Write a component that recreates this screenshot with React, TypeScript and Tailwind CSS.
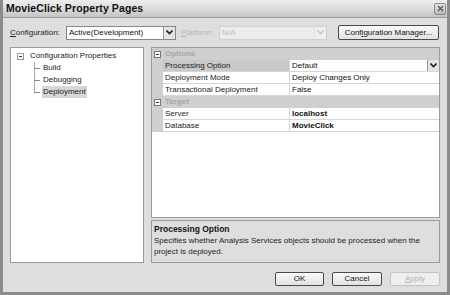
import React from "react";

const font = { fontFamily: '"Liberation Sans", Arial, sans-serif' };

const MinusBox = ({ className = "" }: { className?: string }) => (
  <span className={`flex items-center justify-center w-[7px] h-[7px] border border-[#777] bg-white ${className}`}>
    <span className="w-[3px] h-px bg-[#333]" />
  </span>
);

const Arrow = ({ disabled = false }: { disabled?: boolean }) => (
  <span className={`flex items-center justify-center w-[12px] h-full border-l ${disabled ? "border-[#e0e0e0] bg-[#efefef]" : "border-[#999] bg-[#e4e4e4]"}`}>
    <svg width="7" height="5" viewBox="0 0 7 5">
      <path d="M0.5 0.5 L3.5 3.5 L6.5 0.5" fill="none" stroke={disabled ? "#c8c8c8" : "#222"} strokeWidth="1.6" />
    </svg>
  </span>
);

const Button = ({ label, disabled = false, className = "" }: { label: React.ReactNode; disabled?: boolean; className?: string }) => (
  <button className={`flex items-center justify-center h-[14px] rounded-[2px] border text-[8px] leading-none ${disabled ? "border-[#c4c4c4] text-[#b4b4b4] bg-[#eeeeee]" : "border-[#4a4a4a] text-[#111] bg-gradient-to-b from-[#fafafa] to-[#e2e2e2]"} ${className}`}>
    {label}
  </button>
);

const Category = ({ label }: { label: string }) => (
  <div className="flex h-[12px] bg-[#cfcfcf] items-center">
    <div className="w-[11px] flex justify-center"><MinusBox /></div>
    <span className="pl-[2px] text-[8px] font-bold text-[#a6a6a6]">{label}</span>
  </div>
);

const Row = ({ name, value, bold = false, selected = false }: { name: string; value: string; bold?: boolean; selected?: boolean }) => (
  <div className="flex h-[12px]">
    <div className="w-[11px] bg-[#cfcfcf]" />
    <div className={`w-[127px] flex items-center pl-[2px] border-b border-r border-[#d6d6d6] ${selected ? "bg-[#c9c9c9]" : "bg-white"}`}>
      <span className="text-[8px] text-[#222]">{name}</span>
    </div>
    <div className="flex-1 flex items-center border-b border-[#d6d6d6] bg-white">
      <span className={`flex-1 pl-[2px] text-[8px] text-[#111] ${bold ? "font-bold" : ""}`}>{value}</span>
      {selected && <span className="h-[11px] flex"><Arrow /></span>}
    </div>
  </div>
);

export default function App() {
  return (
    <div style={font} className="w-[450px] h-[295px] flex flex-col bg-[#dedede] border-l-[3px] border-r-[3px] border-b-[3px] border-[#8c8c8c] overflow-hidden">
      {/* title bar */}
      <div className="h-[18px] flex items-center justify-between pl-[3px] pr-[1px] bg-gradient-to-b from-[#eeeeee] via-[#dcdcdc] to-[#c4c4c4] border-b border-[#9a9a9a]">
        <span className="text-[10.5px] font-bold text-[#111] tracking-[0.1px]">MovieClick Property Pages</span>
        <span className="flex items-center justify-center w-[12px] h-[12px] rounded-[2px] border border-[#8a8a8a] bg-gradient-to-b from-[#e8e8e8] to-[#b8b8b8]">
          <svg width="7" height="7" viewBox="0 0 7 7">
            <path d="M1 1 L6 6 M6 1 L1 6" stroke="#555" strokeWidth="1.4" />
          </svg>
        </span>
      </div>

      <div className="flex-1 flex flex-col pl-[7px] pr-[7px]">
        {/* config row */}
        <div className="flex items-center h-[15px] mt-[7px]">
          <span className="text-[8px] text-[#222] w-[56px]"><u>C</u>onfiguration:</span>
          <div className="flex items-center w-[110px] h-[14px] border border-[#888] bg-white">
            <span className="flex-1 pl-[2px] text-[8px] text-[#111]">Active(Development)</span>
            <Arrow />
          </div>
          <span className="ml-[5px] w-[38px] text-[8px] text-[#b5b5b5]"><u>P</u>latform:</span>
          <div className="flex items-center w-[108px] h-[14px] border border-[#d0d0d0] bg-[#ececec]">
            <span className="flex-1 pl-[2px] text-[8px] text-[#bcbcbc]">N/A</span>
            <Arrow disabled />
          </div>
          <Button className="ml-[11px] w-[101px] h-[15px]" label={<>Conf<u>i</u>guration Manager...</>} />
        </div>

        {/* main */}
        <div className="flex mt-[7px] h-[216px] gap-[7px]">
          {/* tree */}
          <div className="w-[134px] border border-[#9a9a9a] bg-white pt-[2px]">
            <div className="flex items-center h-[12px] pl-[6px]">
              <MinusBox className="border-[#999]" />
              <span className="ml-[6px] text-[8px] text-[#222]">Configuration Properties</span>
            </div>
            <div className="relative pl-[31px]">
              <div className="absolute left-[23px] top-0 h-[30px] border-l border-[#aaa]" />
              {["Build", "Debugging", "Deployment"].map((t) => (
                <div key={t} className="relative flex items-center h-[12px]">
                  <div className="absolute left-[-8px] top-[6px] w-[6px] border-t border-[#888]" />
                  <span className={`text-[8px] text-[#222] px-[1px] ${t === "Deployment" ? "bg-[#d6d6d6]" : ""}`}>{t}</span>
                </div>
              ))}
            </div>
          </div>

          {/* grid + description */}
          <div className="flex-1 flex flex-col gap-[2px]">
            <div className="h-[171px] border border-[#9a9a9a] bg-white">
              <Category label="Options" />
              <Row name="Processing Option" value="Default" selected />
              <Row name="Deployment Mode" value="Deploy Changes Only" />
              <Row name="Transactional Deployment" value="False" />
              <Category label="Target" />
              <Row name="Server" value="localhost" bold />
              <Row name="Database" value="MovieClick" bold />
            </div>
            <div className="flex-1 border border-[#9a9a9a] bg-[#dedede] px-[2px] pt-[3px] leading-[11px]">
              <div className="text-[8.5px] font-bold text-[#111]">Processing Option</div>
              <div className="text-[8px] text-[#222]">Specifies whether Analysis Services objects should be processed when the project is deployed.</div>
            </div>
          </div>
        </div>

        {/* buttons */}
        <div className="flex justify-end gap-[8px] mt-[9px]">
          <Button className="w-[49px]" label="OK" />
          <Button className="w-[50px]" label="Cancel" />
          <Button className="w-[50px]" label={<><u>A</u>pply</>} disabled />
        </div>
      </div>
    </div>
  );
}
